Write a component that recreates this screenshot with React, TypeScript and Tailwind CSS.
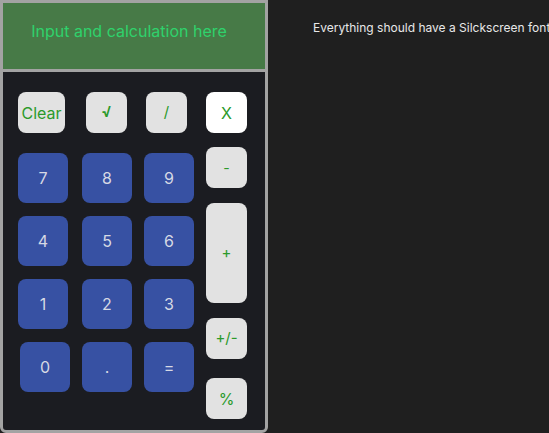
import React from "react";

const numRows = [
  ["7", "8", "9"],
  ["4", "5", "6"],
  ["1", "2", "3"],
];

function NumButton({ label, className = "" }: { label: string; className?: string }) {
  return (
    <button className={"w-[50px] h-[50px] rounded-lg bg-[#3751a3] text-[#d6d9e4] text-[16px] flex items-center justify-center " + className}>
      {label}
    </button>
  );
}

function OpButton({ label, className = "" }: { label: string; className?: string }) {
  return (
    <button className={"rounded-lg text-[#2b9a2b] flex items-center justify-center " + className}>
      {label}
    </button>
  );
}

function App() {
  return (
    <div className="flex w-[549px] h-[433px] bg-[#1f1f1f] font-['Inter',sans-serif]">
      <div className="w-[268px] h-[433px] border-[3px] border-[#a3a3a3] rounded-b-md bg-[#1b1c21] flex flex-col shrink-0">
        <div className="h-[66px] bg-[#477a47] border-b-[3px] border-[#a3a3a3] box-content flex justify-center pr-[10px]">
          <p className="mt-4 text-[16px] leading-6 text-[#2fd26c]">Input and calculation here</p>
        </div>

        <div className="pl-[15px] pt-5">
          <div className="flex items-center">
            <OpButton label="Clear" className="w-[47px] h-[41px] bg-[#e2e2e2] text-[16px]" />
            <OpButton label="√" className="ml-[21px] w-[41px] h-[41px] bg-[#e2e2e2] text-[15px] font-bold" />
            <OpButton label="/" className="ml-[19px] w-[41px] h-[41px] bg-[#e2e2e2] text-[15px]" />
            <OpButton label="X" className="ml-[19px] w-[41px] h-[41px] bg-white text-[16px]" />
          </div>

          <div className="flex">
            <div className="w-[188px] flex flex-col gap-[13px] mt-5">
              {numRows.map((row) => (
                <div key={row[0]} className="flex">
                  <NumButton label={row[0]} />
                  <NumButton label={row[1]} className="ml-[14px]" />
                  <NumButton label={row[2]} className="ml-3" />
                </div>
              ))}
              <div className="flex">
                <NumButton label="0" className="ml-[2px]" />
                <NumButton label="." className="ml-3" />
                <NumButton label="=" className="ml-3" />
              </div>
            </div>

            <div className="flex flex-col mt-[14px]">
              <OpButton label="-" className="w-[41px] h-[41px] bg-[#e2e2e2] text-[14px]" />
              <OpButton label="+" className="mt-[15px] w-[41px] h-[100px] bg-[#e2e2e2] text-[15px]" />
              <OpButton label="+/-" className="mt-[15px] w-[41px] h-[41px] bg-[#e2e2e2] text-[15px]" />
              <OpButton label="%" className="mt-[19px] w-[41px] h-[41px] bg-[#e2e2e2] text-[16px]" />
            </div>
          </div>
        </div>
      </div>

      <p className="ml-[45px] mt-[20px] text-[12px] leading-4 text-[#e8e8e8] whitespace-nowrap">
        Everything should have a Silckscreen font
      </p>
    </div>
  );
}

export default App;
